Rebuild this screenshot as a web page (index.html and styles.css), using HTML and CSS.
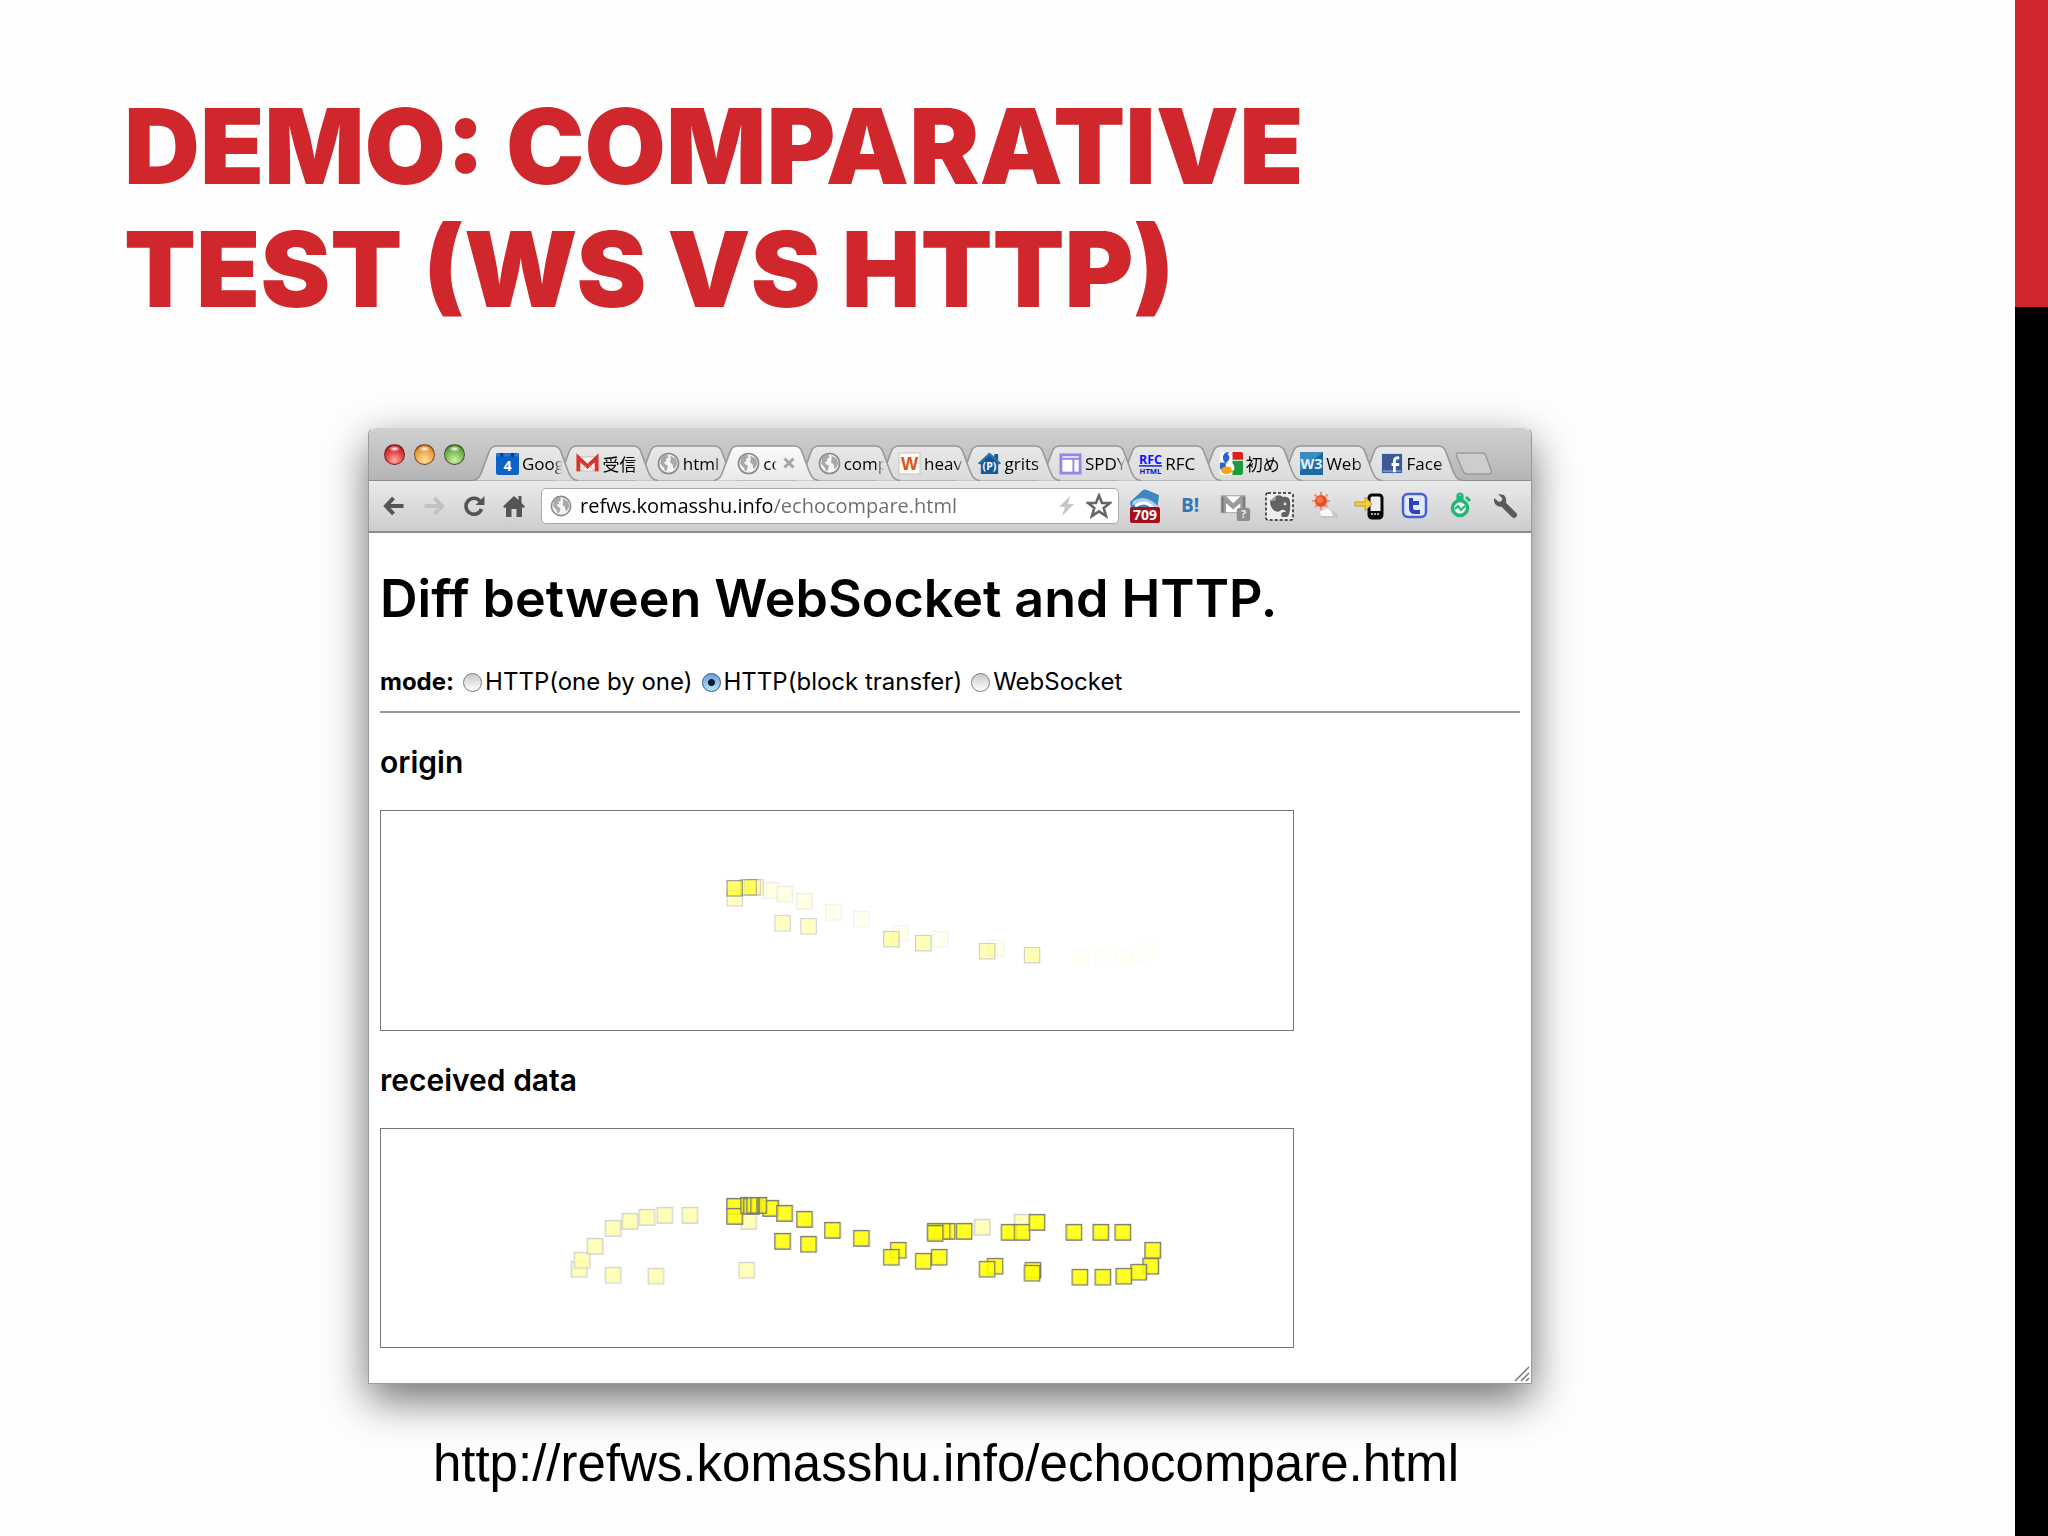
FILE: index.html
```html
<!DOCTYPE html>
<html lang="en">
<head>
<meta charset="utf-8">
<title>Demo: Comparative Test (WS vs HTTP)</title>
<link rel="stylesheet" href="styles.css">
</head>
<body>
<svg class="defs" aria-hidden="true">
  <defs>
    <linearGradient id="tab-fill" x1="0" y1="0" x2="0" y2="1"><stop offset="0" stop-color="#e9e8e9"/><stop offset="1" stop-color="#dcdbdc"/></linearGradient>
    <linearGradient id="tab-fill-active" x1="0" y1="0" x2="0" y2="1"><stop offset="0" stop-color="#fbfbfb"/><stop offset="1" stop-color="#ebeaeb"/></linearGradient>
    <symbol id="tab-shape" viewBox="0 0 106 36">
      <path d="M0 35.500C6 34 7 31 9 26L16 7Q18 1 24 1H80Q86 1 88 7L95 26C97 31 99 35 105 35.500"/>
    </symbol>
    <symbol id="globe" viewBox="0 0 22 22">
      <circle cx="11" cy="11" r="9.600" fill="#f4f4f4" stroke="#8b8b8b" stroke-width="1.600"/>
      <path d="M4 5Q7 2.500 10 2.500L11 5L8.500 7L9 9L6.500 9.500L8 12L10.500 13L9.500 17L8 19L6.500 15L3 11Z M13 3.500L18 6.500L19.500 11L17.500 15L15.500 16L15 12L12.500 10L13 7Z" fill="#a9a9a9"/>
    </symbol>
    <symbol id="point" viewBox="0 0 17 17" width="17" height="17"><rect x=".7" y=".7" width="15.600" height="15.600" fill="#ff0" fill-opacity=".86" stroke="#777" stroke-width="1.400"/></symbol>
  </defs>
</svg>
<main class="slide">
  <h1 class="slide-title">Demo: Comparative<br>Test (WS vs HTTP)</h1>
  <figure class="shot">
    <div class="window">
      <header class="tabstrip">
        <div class="lights">
          <button class="light light-close" aria-label="Close window"></button>
          <button class="light light-min" aria-label="Minimize window"></button>
          <button class="light light-zoom" aria-label="Zoom window"></button>
        </div>
        <nav class="tabs" aria-label="Tabs">
          <button class="tab"><svg class="tab-bg"><use href="#tab-shape"/></svg>
            <svg class="fav" viewBox="0 0 24 24"><rect x="0" y="1" width="24" height="23" rx="2" fill="#0b63c9"/><path d="M0 3H24" stroke="#1d79e4" stroke-width="3"/><path d="M6 1V5M17 1V5" stroke="#083a7c" stroke-width="3"/><text x="12" y="20" font-size="15" font-weight="700" fill="#fff" text-anchor="middle">4</text></svg>
            <span class="tab-label">Goog</span></button>
          <button class="tab"><svg class="tab-bg"><use href="#tab-shape"/></svg>
            <svg class="fav" viewBox="0 0 24 24"><path d="M1 5H23V20H1Z" fill="#f7f1f1" stroke="#ddb7b7"/><path d="M2.500 20V6L12 15L21.500 6V20" fill="none" stroke="#d8342e" stroke-width="4"/><path d="M5 20L10 14M19 20L14 14" stroke="#e0b5b3"/></svg>
            <span class="tab-label">受信</span></button>
          <button class="tab"><svg class="tab-bg"><use href="#tab-shape"/></svg>
            <svg class="fav"><use href="#globe"/></svg>
            <span class="tab-label">html</span></button>
          <button class="tab tab-active"><svg class="tab-bg"><use href="#tab-shape"/></svg>
            <svg class="fav"><use href="#globe"/></svg>
            <span class="tab-label">co</span><svg class="tab-x" viewBox="0 0 12 12"><path d="M1.500 1.500L10.500 10.500M10.500 1.500L1.500 10.500" stroke="#a5a5a5" stroke-width="3"/></svg></button>
          <button class="tab"><svg class="tab-bg"><use href="#tab-shape"/></svg>
            <svg class="fav"><use href="#globe"/></svg>
            <span class="tab-label">comp</span></button>
          <button class="tab"><svg class="tab-bg"><use href="#tab-shape"/></svg>
            <svg class="fav" viewBox="0 0 24 24"><rect x="1" y="1" width="22" height="22" fill="#fdfaf4" stroke="#c9c2b8"/><text x="12" y="19" font-size="19" font-weight="700" fill="#d9541e" text-anchor="middle" class="w-mark">W</text></svg>
            <span class="tab-label">heav</span></button>
          <button class="tab"><svg class="tab-bg"><use href="#tab-shape"/></svg>
            <svg class="fav" viewBox="0 0 24 24"><path d="M0 12L12 1L17 5V2H21V9L24 12L21 13V23H3V13Z" fill="#15589c"/><path d="M1 12L12 2L23 12" fill="none" stroke="#2b79a5" stroke-width="2"/><text x="12" y="19" font-size="11" font-weight="700" fill="#fff" text-anchor="middle">(P)</text></svg>
            <span class="tab-label">grits</span></button>
          <button class="tab"><svg class="tab-bg"><use href="#tab-shape"/></svg>
            <svg class="fav" viewBox="0 0 24 24"><rect x="2" y="3" width="20" height="19" fill="#fff" stroke="#9388ea" stroke-width="3"/><path d="M3 7H21M15 8V21" stroke="#9388ea" stroke-width="2"/></svg>
            <span class="tab-label">SPDY</span></button>
          <button class="tab"><svg class="tab-bg"><use href="#tab-shape"/></svg>
            <svg class="fav" viewBox="0 0 24 24"><text x="12" y="12" font-size="13" font-weight="700" fill="#11f" text-anchor="middle" class="mark">RFC</text><path d="M0 14.500H24" stroke="#11f" stroke-width="1.500"/><text x="12" y="23" font-size="8" font-weight="700" fill="#11c" text-anchor="middle" class="mark">HTML</text></svg>
            <span class="tab-label">RFC</span></button>
          <button class="tab"><svg class="tab-bg"><use href="#tab-shape"/></svg>
            <svg class="fav" viewBox="0 0 24 24"><rect width="24" height="24" rx="2" fill="#fff"/><path d="M13 0H22Q24 0 24 2V8H13Z" fill="#e0201b"/><path d="M13 9H24V22Q24 24 22 24H13Z" fill="#1f9a3f"/><path d="M0 11H6V18H0Z" fill="#2a62d0"/><ellipse cx="8" cy="6" rx="5" ry="6" fill="#2a62d0"/><ellipse cx="7" cy="19" rx="6" ry="4" fill="#f6a415"/><path d="M9 1Q14 6 9 11Q15 14 13 19" fill="none" stroke="#fff" stroke-width="3"/></svg>
            <span class="tab-label">初め</span></button>
          <button class="tab"><svg class="tab-bg"><use href="#tab-shape"/></svg>
            <svg class="fav" viewBox="0 0 24 24"><rect width="24" height="24" fill="#1b6aa5"/><path d="M0 0H24L0 20Z" fill="#3a8cc2"/><text x="12" y="18" font-size="15" font-weight="700" fill="#e7f3fb" text-anchor="middle" class="mark">W3</text></svg>
            <span class="tab-label">Web</span></button>
          <button class="tab"><svg class="tab-bg"><use href="#tab-shape"/></svg>
            <svg class="fav" viewBox="0 0 24 24"><rect x="1" y="2" width="21" height="20" fill="#3b5998"/><path d="M2 20H21" stroke="#7c92c4" stroke-width="2"/><path d="M14 21V13M11 13H19M14 21V9Q14 6 19 6" fill="none" stroke="#fff" stroke-width="3"/></svg>
            <span class="tab-label">Face</span></button>
        </nav>
        <button class="new-tab" aria-label="New tab"><svg viewBox="0 0 38 24"><path d="M4 1H27Q30 1 31 4L36 18Q37 22 33 22H13Q9 22 8 19L2 5Q0 1 4 1Z" fill="#cecdce" stroke="#9c9c9c" stroke-width="1.500"/></svg></button>
      </header>
      <div class="toolbar">
        <div class="nav-buttons">
          <button class="tool" aria-label="Back"><svg viewBox="0 0 22 22"><path d="M20.500 11H4M10.500 3L3 11L10.500 19" fill="none" stroke="#555" stroke-width="4"/></svg></button>
          <button class="tool" aria-label="Forward"><svg viewBox="0 0 22 22"><path d="M1.500 11H18M11.500 3L19 11L11.500 19" fill="none" stroke="#c2c2c2" stroke-width="4"/></svg></button>
          <button class="tool" aria-label="Reload"><svg viewBox="0 0 22 22"><path d="M17.500 6.500A8 8 0 1 0 18.500 14" fill="none" stroke="#555" stroke-width="3.600"/><path d="M21.500 1V10H12.500Z" fill="#555"/></svg></button>
          <button class="tool" aria-label="Home"><svg viewBox="0 0 22 22"><path d="M11 1L0 11.500L1.500 13L3 12V22H8.500V14H13.500V22H19V12L20.500 13L22 11.500L18.500 8V1H15.500V5Z" fill="#555"/></svg></button>
        </div>
        <div class="omnibox">
          <svg class="omni-globe"><use href="#globe"/></svg>
          <input class="url" type="text" aria-label="Address" value="refws.komasshu.info/echocompare.html">
          <svg class="bolt" viewBox="0 0 16 20"><path d="M11 0L0 11H6L3 20L15 8H9Z" fill="#c6c6c6"/></svg>
          <svg class="star" viewBox="0 0 26 26"><path d="M13 2.500L16 10H24L17.700 15L20 23L13 18.300L6 23L8.300 15L2 10H10Z" fill="#fff" stroke="#666" stroke-width="2.600"/></svg>
        </div>
        <div class="extensions">
          <button class="ext" aria-label="Feed reader, 709 unread"><svg viewBox="0 0 32 34"><path d="M1 13L14 1Q16 0 18 1L30 6L28 24H3Z" fill="#3f87c0"/><path d="M4 12Q16 4 29 17L28 22L22 20Q16 11 3 16Z" fill="#a9d0ec"/><path d="M6 17Q17 10 24 19" fill="none" stroke="#fff" stroke-width="3"/><rect x="1" y="18" width="30" height="16" rx="2" fill="#a80d1c"/><text x="16" y="31" font-size="14" font-weight="700" fill="#fff" text-anchor="middle">709</text></svg></button>
          <button class="ext" aria-label="Bookmark"><svg viewBox="0 0 32 34"><text x="16" y="23" font-size="19" font-weight="700" fill="#3277b5" text-anchor="middle">B!</text></svg></button>
          <button class="ext" aria-label="Mail"><svg viewBox="0 0 36 34"><rect x="2" y="5" width="28" height="20" fill="#9b9b9b"/><path d="M8 24V14L16 21L24 14V24Z" fill="#fff"/><path d="M8 6L16 14L24 6Z" fill="#fff"/><path d="M4 7V24M28 7V24" stroke="#777" stroke-width="2"/><rect x="20" y="19" width="15" height="15" rx="3" fill="#8e8e8e"/><text x="27.500" y="31" font-size="12" font-weight="700" fill="#eee" text-anchor="middle">?</text></svg></button>
          <button class="ext" aria-label="Web clipper"><svg viewBox="0 0 32 34"><rect x="2" y="4" width="27" height="27" rx="2" fill="#eee" stroke="#222" stroke-width="1.500" stroke-dasharray="3 2"/><path d="M6 12L12 7Q16 5 19 8Q25 7 26 12Q27 25 23 28H18Q16 25 19 23H22Q21 20 17 21Q15 24 11 22Q6 19 6 12Z" fill="#636363"/><path d="M5 11H11V7" fill="none" stroke="#ccc"/><circle cx="21" cy="15" r="1.400" fill="#ddd"/></svg></button>
          <button class="ext" aria-label="Weather"><svg viewBox="0 0 32 34"><path d="M12 3V21M3 12H21M5.500 5.500L18.500 18.500M18.500 5.500L5.500 18.500" stroke="#f0906a" stroke-width="2" stroke-dasharray="3 12 3"/><circle cx="12" cy="12" r="6" fill="#ef4d24"/><circle cx="11" cy="11" r="3" fill="#f97a44"/><path d="M12 29Q8 23 14 21Q19 15 23 22Q30 23 29 29Z" fill="#c6c6c6"/><path d="M12 27Q9 22 15 21Q19 17 22 22L24 27Z" fill="#fafafa"/></svg></button>
          <button class="ext" aria-label="Send to phone"><svg viewBox="0 0 32 34"><rect x="15" y="6" width="13" height="23" rx="3" fill="#eee" stroke="#080808" stroke-width="3"/><path d="M15 22H28V29H15Z" fill="#080808"/><path d="M17 25H26" stroke="#aaa" stroke-width="2" stroke-dasharray="2 1"/><path d="M1 13H11V8L18 15L11 22V17H1Z" fill="#f6ce36" stroke="#c69b1d"/></svg></button>
          <button class="ext" aria-label="Twitter"><svg viewBox="0 0 32 34"><rect x="4" y="5" width="23" height="23" rx="5" fill="#e3e8fb" stroke="#4760cf" stroke-width="2.500"/><path d="M12 9V19Q12 23 16 23H21M12 14H20" fill="none" stroke="#2b42bd" stroke-width="4"/></svg></button>
          <button class="ext" aria-label="Timer"><svg viewBox="0 0 32 34"><circle cx="16" cy="19" r="7.500" fill="#e9f7ef" stroke="#22b573" stroke-width="3.500"/><path d="M14 8H18V11H14ZM22 8L26 12" stroke="#22b573" stroke-width="3"/><circle cx="16" cy="7" r="2.500" fill="none" stroke="#22b573" stroke-width="2"/><path d="M11 20L14 17L17 21L21 17" fill="none" stroke="#22b573" stroke-width="2"/></svg></button>
          <button class="ext" aria-label="Settings"><svg viewBox="0 0 32 34"><path d="M14 15L25 26" stroke="#5a5a5a" stroke-width="6" stroke-linecap="round"/><path d="M5 9Q4 18 14 18Q20 12 15 6L9 5L13 9Q14 12 10 13Z" fill="#5a5a5a"/></svg></button>
        </div>
      </div>
      <div class="page">
        <h2 class="page-title">Diff between WebSocket and HTTP.</h2>
        <fieldset class="modes">
          <legend class="mode-name">mode:</legend>
          <label class="mode"><input type="radio" name="mode">HTTP(one by one)</label>
          <label class="mode"><input type="radio" name="mode" checked>HTTP(block transfer)</label>
          <label class="mode"><input type="radio" name="mode">WebSocket</label>
        </fieldset>
        <hr class="rule">
        <h3 class="plot-title">origin</h3>
        <svg class="plot" viewBox="0 0 914 219" role="img" aria-label="origin points">
          <g opacity=".03"><use href="#point" x="693" y="140"/><use href="#point" x="714" y="140"/><use href="#point" x="736" y="139"/><use href="#point" x="751" y="135"/><use href="#point" x="763" y="129"/></g>
          <g opacity=".08"><use href="#point" x="445" y="93"/><use href="#point" x="473" y="100"/><use href="#point" x="512" y="114"/><use href="#point" x="552" y="120"/><use href="#point" x="608" y="129"/></g>
          <g opacity=".13"><use href="#point" x="382" y="71"/><use href="#point" x="396" y="75"/><use href="#point" x="416" y="82"/></g>
          <g opacity=".28"><use href="#point" x="346" y="79"/><use href="#point" x="394" y="104"/><use href="#point" x="420" y="107"/></g>
          <g opacity=".34"><use href="#point" x="503" y="120"/><use href="#point" x="535" y="124"/><use href="#point" x="599" y="132"/><use href="#point" x="644" y="136"/></g>
          <use href="#point" x="367" y="68" opacity=".2"/><use href="#point" x="364" y="68" opacity=".3"/><use href="#point" x="360" y="68" opacity=".5"/><use href="#point" x="346" y="69" opacity=".7"/>
        </svg>
        <h3 class="plot-title">received data</h3>
        <svg class="plot" viewBox="0 0 914 219" role="img" aria-label="received points">
          <g class="trace-faint">
            <use href="#point" x="190" y="132"/><use href="#point" x="193" y="123"/><use href="#point" x="206" y="109"/><use href="#point" x="224" y="91"/><use href="#point" x="241" y="84"/><use href="#point" x="258" y="80"/><use href="#point" x="276" y="78"/><use href="#point" x="301" y="78"/><use href="#point" x="224" y="138"/><use href="#point" x="267" y="139"/><use href="#point" x="358" y="133"/><use href="#point" x="360" y="84"/><use href="#point" x="594" y="90"/><use href="#point" x="634" y="85"/>
          </g>
          <use href="#point" x="346" y="69"/><use href="#point" x="346" y="79"/><use href="#point" x="382" y="71"/><use href="#point" x="360" y="68"/><use href="#point" x="363" y="69"/><use href="#point" x="366" y="68"/><use href="#point" x="370" y="68"/>
          <path d="M378 69V84" stroke="#777" stroke-width="4" stroke-opacity=".8"/>
          <use href="#point" x="396" y="76"/><use href="#point" x="416" y="82"/><use href="#point" x="444" y="93"/><use href="#point" x="473" y="101"/><use href="#point" x="394" y="104"/><use href="#point" x="420" y="107"/><use href="#point" x="510" y="113"/><use href="#point" x="503" y="120"/><use href="#point" x="535" y="124"/><use href="#point" x="551" y="120"/>
          <use href="#point" x="576" y="94"/><use href="#point" x="559" y="94"/><use href="#point" x="554" y="94"/><use href="#point" x="547" y="94"/><use href="#point" x="547" y="96"/>
          <use href="#point" x="621" y="95"/><use href="#point" x="634" y="95"/><use href="#point" x="649" y="85"/><use href="#point" x="686" y="95"/><use href="#point" x="713" y="95"/><use href="#point" x="735" y="95"/><use href="#point" x="765" y="113"/><use href="#point" x="763" y="129"/><use href="#point" x="751" y="135"/><use href="#point" x="736" y="139"/><use href="#point" x="715" y="140"/><use href="#point" x="692" y="140"/><use href="#point" x="607" y="129"/><use href="#point" x="599" y="132"/><use href="#point" x="645" y="133"/><use href="#point" x="644" y="136"/>
        </svg>
        <svg class="grip" viewBox="0 0 16 16" aria-hidden="true"><path d="M1 15L15 1M7 15L15 7M12 15L15 12" stroke="#777" stroke-width="1.500"/></svg>
      </div>
    </div>
    <figcaption class="caption">http://refws.komasshu.info/echocompare.html</figcaption>
  </figure>
</main>
<aside class="stripe" aria-hidden="true"></aside>
</body>
</html>
```
FILE: styles.css
```css
* { box-sizing: border-box; }

body {
  margin: 0;
  min-height: 100vh;
  display: flex;
  background: #fefefe;
  color: #000;
  font-family: "Liberation Sans", Arial, sans-serif;
}

button {
  margin: 0;
  padding: 0;
  border: 0;
  background: none;
  color: inherit;
  font: inherit;
}

svg { display: block; flex: none; }

.defs { position: absolute; width: 0; height: 0; }

/* Slide */
.slide { flex: 1; min-width: 0; padding: 84px 124px 16px; }

.stripe {
  flex: none;
  width: 33px;
  background: linear-gradient(#d0272d 20%, #000 20%);
}

.slide-title {
  margin: 0;
  color: #d0272d;
  font-family: Inter, "Liberation Sans", sans-serif;
  font-size: 105px;
  font-weight: 900;
  line-height: 123px;
  text-transform: uppercase;
}

.shot { width: 1164px; max-width: 100%; margin: 97px 0 0 244px; }

.caption {
  margin-top: 50px;
  padding-right: 8px;
  text-align: center;
  font-size: 51px;
  line-height: 60px;
}

/* Browser window */
.window {
  border: 1px solid #9a9a9a;
  border-top-color: #e2e2e2;
  border-radius: 8px 8px 0 0;
  background: #fff;
  box-shadow: 0 16px 44px rgba(0, 0, 0, .56);
}

.tabstrip {
  display: flex;
  align-items: flex-end;
  height: 53px;
  padding-left: 15px;
  border-bottom: 1px solid #8e8e8e;
  border-radius: 8px 8px 0 0;
  background: linear-gradient(#d1d0d1, #b6b5b6);
  font-family: "Open Sans", "Noto Sans CJK JP", sans-serif;
  font-size: 17px;
}

.lights { display: flex; gap: 9px; padding-bottom: 15px; width: 89px; flex: none; }

.light {
  width: 21px;
  height: 21px;
  border: 1px solid rgba(60, 20, 20, .6);
  border-radius: 50%;
}
.light-close { background: radial-gradient(ellipse 6px 3px at 50% 20%, #fff, transparent), radial-gradient(circle at 50% 80%, #ffaaa8, #dc2d2d 60%, #8f1616); }
.light-min { background: radial-gradient(ellipse 6px 3px at 50% 20%, #fff, transparent), radial-gradient(circle at 50% 80%, #ffe2a0, #eb9a3a 60%, #995614); }
.light-zoom { background: radial-gradient(ellipse 6px 3px at 50% 20%, #fff, transparent), radial-gradient(circle at 50% 80%, #d0f0a8, #6bb048 60%, #356820); }

.tabs {
  display: grid;
  grid-template-columns: repeat(12, minmax(0, 1fr));
  flex: none;
  width: 965px;
  margin-bottom: -1px;
}

/* Neighbouring tabs overlap; each one lies over the tab to its right */
.tab {
  position: relative;
  display: flex;
  align-items: center;
  gap: 3px;
  width: 106px;
  height: 36px;
  padding: 0 0 0 23px;
}
.tab:nth-child(1) { z-index: 12; }
.tab:nth-child(2) { z-index: 11; }
.tab:nth-child(3) { z-index: 10; }
.tab:nth-child(5) { z-index: 8; }
.tab:nth-child(6) { z-index: 7; }
.tab:nth-child(7) { z-index: 6; }
.tab:nth-child(8) { z-index: 5; }
.tab:nth-child(9) { z-index: 4; }
.tab:nth-child(10) { z-index: 3; }
.tab:nth-child(11) { z-index: 2; }
.tab:nth-child(12) { z-index: 1; }
.tab.tab-active { z-index: 13; }

.tab-bg {
  position: absolute;
  inset: 0;
  width: 106px;
  height: 36px;
  fill: url(#tab-fill);
  stroke: #959595;
  stroke-width: 1.5px;
}
.tab-active .tab-bg { fill: url(#tab-fill-active); }

.fav { position: relative; width: 23px; height: 23px; }

.tab-label {
  position: relative;
  width: 41px;
  overflow: hidden;
  white-space: nowrap;
  text-align: left;
  -webkit-mask-image: linear-gradient(90deg, #000 75%, transparent);
  mask-image: linear-gradient(90deg, #000 75%, transparent);
}
.tab-active .tab-label { width: 14px; }
.tab-x { position: relative; width: 12px; height: 12px; margin-left: 3px; }

.new-tab { width: 38px; height: 24px; margin: 0 0 4px 17px; }

.toolbar {
  display: flex;
  align-items: center;
  height: 52px;
  padding: 0 10px 0 14px;
  border-bottom: 2px solid #8b8b8b;
  background: linear-gradient(#ebeaeb, #cdccce);
}

.nav-buttons { display: flex; gap: 18px; }
.tool, .tool svg { width: 22px; height: 22px; }

.omnibox {
  flex: 1;
  display: flex;
  align-items: center;
  min-width: 0;
  height: 36px;
  margin-left: 16px;
  padding: 0 6px 0 8px;
  border: 1px solid #aaa;
  border-radius: 5px;
  background: #fff;
}
.omni-globe { width: 22px; height: 22px; }
.url {
  flex: 1;
  min-width: 0;
  margin-left: 8px;
  padding: 0;
  border: 0;
  outline: 0;
  background: linear-gradient(90deg, #000 192px, #6c6c6c 192px);
  -webkit-background-clip: text;
  background-clip: text;
  color: transparent;
  font-family: "Open Sans", sans-serif;
  font-size: 20px;
  line-height: 32px;
}
.bolt { width: 16px; height: 20px; }
.star { width: 26px; height: 26px; margin-left: 11px; }

.extensions { display: flex; gap: 13px; margin-left: 10px; font-family: "Open Sans", sans-serif; }
.ext, .ext svg { width: 32px; height: 34px; }

.w-mark { font-family: "Liberation Sans", sans-serif; }
.mark { font-family: "Open Sans", sans-serif; }

/* Page in the window */
.page {
  position: relative;
  padding: 38px 11px 4px;
  font-family: Inter, "Noto Sans CJK JP", sans-serif;
  font-size: 24px;
}

.page-title { margin: 0; font-size: 52px; font-weight: 600; line-height: 56px; }

.modes {
  display: flex;
  gap: 9px;
  margin: 39px 0 0;
  padding: 0;
  border: 0;
  line-height: 32px;
}
.mode-name { float: left; padding: 0; font-weight: 700; }
.mode { display: flex; align-items: center; gap: 3px; }
.mode input {
  appearance: none;
  width: 19px;
  height: 19px;
  margin: 0;
  border: 1px solid #7d7d7d;
  border-radius: 50%;
  background: linear-gradient(#c9c9c9, #fff);
}
.mode input:checked {
  border-color: #2f5687;
  background: radial-gradient(circle, #0c1c30 3px, transparent 4px), linear-gradient(#6d9fd6, #b5e4fb);
}

.rule { height: 2px; margin: 13px 0 31px; border: 0; background: #999; }

.plot-title { margin: 0 0 30px; font-size: 30px; font-weight: 600; line-height: 36px; }

.plot {
  width: 914px;
  max-width: 100%;
  border: 1px solid #777;
  margin-bottom: 31px;
}
.trace-faint { opacity: .33; }

.grip { position: absolute; right: 1px; bottom: 1px; width: 16px; height: 16px; }
```
